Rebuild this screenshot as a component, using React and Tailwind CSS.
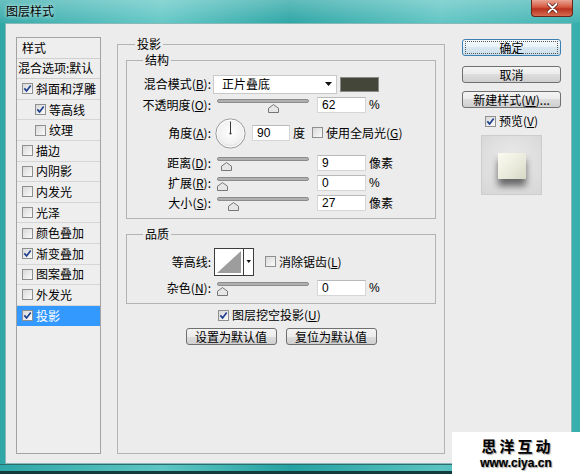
import React from 'react'

// 图层样式 dialog — 投影 page

const styles = [
  { name: '斜面和浮雕', on: true },
  { name: '等高线', on: true, sub: true },
  { name: '纹理', on: false, sub: true },
  { name: '描边', on: false },
  { name: '内阴影', on: false },
  { name: '内发光', on: false },
  { name: '光泽', on: false },
  { name: '颜色叠加', on: false },
  { name: '渐变叠加', on: true },
  { name: '图案叠加', on: false },
  { name: '外发光', on: false },
  { name: '投影', on: true, active: true },
]

function Check({ on }) {
  return (
    <span className="inline-flex h-[11px] w-[11px] shrink-0 items-center justify-center border border-[#8e8f8f] bg-linear-to-br from-[#d9d9d9] to-[#fbfbfb]">
      {on && (
        <svg width="9" height="9" viewBox="0 0 9 9">
          <path d="M1.3 4.4 L3.6 6.9 L7.7 1.6" fill="none" stroke="#1f3f8f" strokeWidth="1.7" />
        </svg>
      )}
    </span>
  )
}

function Key({ text, k }) {
  return (
    <>
      {text}(<span className="underline">{k}</span>)
    </>
  )
}

function Slider({ at }) {
  return (
    <div className="relative h-[16px] w-[92px] shrink-0">
      <div className="mt-[4px] h-[4px] w-full rounded-full border border-[#8c8c8c] bg-[#b0b0b0]" />
      <svg className="absolute top-[5px]" style={{ left: at }} width="11" height="9" viewBox="0 0 11 9">
        <path d="M0.5 8.5 V4.2 L5.5 0.6 L10.5 4.2 V8.5 Z" fill="#e6e6e6" stroke="#767676" />
      </svg>
    </div>
  )
}

function Num({ v }) {
  return (
    <div className="flex h-[16px] w-[49px] shrink-0 items-center border border-[#d6d6d6] border-t-[#b9b9b9] bg-white pl-[4px] font-['Liberation_Sans',sans-serif] text-[12px]">
      {v}
    </div>
  )
}

function Label({ children }) {
  return <div className="w-[84px] shrink-0 text-right">{children}</div>
}

function Btn({ children, def, className = '' }) {
  return (
    <button
      className={`flex h-[17px] items-center justify-center rounded-[3px] border text-[12px] leading-none ${
        def
          ? 'border-[#3c7fb1] bg-[linear-gradient(#f4f9fc,#e9f3f8_50%,#d9e8f1_50%,#cddfea)]'
          : 'border-[#707070] bg-[linear-gradient(#f4f4f4,#ebebeb_50%,#dddddd_50%,#cfcfcf)]'
      } ${className}`}
    >
      {children}
    </button>
  )
}

function Dial() {
  return (
    <svg width="31" height="31" viewBox="0 0 31 31" className="shrink-0">
      <defs>
        <radialGradient id="dg" cx="50%" cy="45%" r="55%">
          <stop offset="0%" stopColor="#ffffff" />
          <stop offset="75%" stopColor="#f1f1f1" />
          <stop offset="100%" stopColor="#d2d2d2" />
        </radialGradient>
      </defs>
      <circle cx="15.5" cy="15.5" r="14.6" fill="url(#dg)" stroke="#9c9c9c" />
      <circle cx="15.5" cy="15.5" r="13.4" fill="none" stroke="#ffffff" />
      <line x1="15.5" y1="15.5" x2="15.5" y2="3.5" stroke="#3a3a3a" strokeWidth="1" />
      <circle cx="15.5" cy="15.5" r="1.1" fill="#3a3a3a" />
    </svg>
  )
}

function Contour() {
  return (
    <svg width="40" height="28" viewBox="0 0 40 28" className="shrink-0">
      <rect x="0.5" y="0.5" width="39" height="27" fill="#ffffff" stroke="#3c3c3c" />
      <polygon points="3,25 27,3 27,25" fill="#9d9d9d" />
      <line x1="29.5" y1="0.5" x2="29.5" y2="27.5" stroke="#3c3c3c" />
      <polygon points="32.5,12 37,12 34.75,15" fill="#111" />
    </svg>
  )
}

export default function App() {
  return (
    <div className="relative flex h-[474px] w-[580px] flex-col overflow-hidden bg-[linear-gradient(90deg,#2ea7a6,#5ec6c4_28%,#24a2a1_50%,#5ac3c1_76%,#37afad)] font-['Noto_Sans_CJK_SC','Liberation_Sans',sans-serif] text-[12px] leading-none text-black">
      {/* title bar */}
      <div className="flex h-[23px] shrink-0 items-start justify-between bg-[linear-gradient(rgba(255,255,255,0.28),rgba(255,255,255,0.05))]">
        <span className="mt-[5px] pl-[6px] text-[12px] [text-shadow:0_0_4px_#ffffff]">图层样式</span>
        <div className="mr-[7px] flex h-[17px] w-[42px] items-center justify-center rounded-b-[4px] border border-t-0 border-[#6a2418] bg-[linear-gradient(#eba594,#d4573f_45%,#b9311d_55%,#d56c50)]">
          <svg width="11" height="10" viewBox="0 0 11 10">
            <path d="M1.5 1 L9.5 9 M9.5 1 L1.5 9" stroke="#4a150d" strokeWidth="3.4" strokeLinecap="round" />
            <path d="M1.5 1 L9.5 9 M9.5 1 L1.5 9" stroke="#ffffff" strokeWidth="2" strokeLinecap="round" />
          </svg>
        </div>
      </div>

      {/* client area */}
      <div className="ml-[5px] flex h-[441px] w-[567px] shrink-0 gap-0 border border-[#86b9b8] bg-[#ececec] px-[10px] pt-[12px]">
        {/* left style list */}
        <div className="mt-[1px] h-[417px] w-[85px] shrink-0 overflow-hidden border border-[#a3a3a3] bg-[#eeeeee]">
          <div className="flex h-[20.6px] items-center border-b border-[#cfcfcf] pl-[5px]">样式</div>
          <div className="flex h-[20.6px] items-center overflow-hidden whitespace-nowrap border-b border-[#cfcfcf] pl-[1px]">混合选项:默认</div>
          {styles.map((s) => (
            <div
              key={s.name}
              className={`flex h-[20.6px] items-center gap-[3px] border-b ${
                s.active ? 'border-[#3399ff] bg-[#3399ff] text-white' : 'border-[#d6d6d6]'
              } ${s.sub ? 'pl-[18px]' : 'pl-[5px]'}`}
            >
              <Check on={s.on} />
              <span>{s.name}</span>
            </div>
          ))}
        </div>

        {/* middle: 投影 */}
        <fieldset className="ml-[16px] h-[418px] w-[328px] shrink-0 border border-[#b3b3b3]">
          <legend className="ml-[17px] px-[2px] leading-[16px]">投影</legend>
          <div className="px-[8px]">
            <fieldset className="border border-[#b3b3b3] pb-[7px]">
              <legend className="ml-[16px] px-[2px] leading-[16px]">结构</legend>

              <div className="mt-[6px] flex h-[20px] items-center">
                <Label><Key text="混合模式" k="B" />:</Label>
                <div className="ml-[2px] flex h-[19px] w-[124px] items-center justify-between border border-[#c9c9c9] bg-white pl-[8px] pr-[4px]">
                  <span>正片叠底</span>
                  <svg width="7" height="4" viewBox="0 0 7 4">
                    <polygon points="0,0 7,0 3.5,4" fill="#111" />
                  </svg>
                </div>
                <div className="ml-[3px] h-[15px] w-[39px] border border-[#8a8a8a] bg-[#45463a]" />
              </div>

              <div className="mt-[3px] flex h-[16px] items-center">
                <Label><Key text="不透明度" k="O" />:</Label>
                <div className="ml-[6px]"><Slider at={51} /></div>
                <div className="ml-[8px]"><Num v="62" /></div>
                <span className="ml-[3px] font-['Liberation_Sans',sans-serif]">%</span>
              </div>

              <div className="mt-[4px] flex h-[32px] items-center">
                <Label><Key text="角度" k="A" />:</Label>
                <div className="ml-[4px]"><Dial /></div>
                <div className="ml-[6px] flex h-[16px] w-[38px] items-center border border-[#d6d6d6] border-t-[#b9b9b9] bg-white pl-[4px] font-['Liberation_Sans',sans-serif]">90</div>
                <span className="ml-[3px]">度</span>
                <span className="ml-[7px]"><Check on={false} /></span>
                <span className="ml-[3px]"><Key text="使用全局光" k="G" /></span>
              </div>

              <div className="mt-[6px] flex h-[16px] items-center">
                <Label><Key text="距离" k="D" />:</Label>
                <div className="ml-[6px]"><Slider at={4} /></div>
                <div className="ml-[8px]"><Num v="9" /></div>
                <span className="ml-[3px]">像素</span>
              </div>

              <div className="mt-[4px] flex h-[16px] items-center">
                <Label><Key text="扩展" k="R" />:</Label>
                <div className="ml-[6px]"><Slider at={0} /></div>
                <div className="ml-[8px]"><Num v="0" /></div>
                <span className="ml-[3px] font-['Liberation_Sans',sans-serif]">%</span>
              </div>

              <div className="mt-[4px] flex h-[16px] items-center">
                <Label><Key text="大小" k="S" />:</Label>
                <div className="ml-[6px]"><Slider at={11} /></div>
                <div className="ml-[8px]"><Num v="27" /></div>
                <span className="ml-[3px]">像素</span>
              </div>
            </fieldset>

            <fieldset className="mt-[7px] border border-[#b3b3b3] pb-[7px]">
              <legend className="ml-[16px] px-[2px] leading-[16px]">品质</legend>
              <div className="mt-[6px] flex h-[27px] items-center">
                <Label>等高线:</Label>
                <div className="ml-[3px]"><Contour /></div>
                <span className="ml-[11px]"><Check on={false} /></span>
                <span className="ml-[3px]"><Key text="消除锯齿" k="L" /></span>
              </div>
              <div className="mt-[5px] flex h-[16px] items-center">
                <Label><Key text="杂色" k="N" />:</Label>
                <div className="ml-[6px]"><Slider at={0} /></div>
                <div className="ml-[8px]"><Num v="0" /></div>
                <span className="ml-[3px] font-['Liberation_Sans',sans-serif]">%</span>
              </div>
            </fieldset>

            <div className="mt-[4px] flex h-[14px] items-center gap-[3px] pl-[92px]">
              <Check on />
              <span><Key text="图层挖空投影" k="U" /></span>
            </div>
            <div className="mt-[6px] flex justify-center gap-[9px]">
              <Btn className="w-[91px]">设置为默认值</Btn>
              <Btn className="w-[91px]">复位为默认值</Btn>
            </div>
          </div>
        </fieldset>

        {/* right buttons */}
        <div className="ml-[17px] mt-[3px] flex w-[99px] shrink-0 flex-col items-center">
          <Btn def className="w-[99px]">
            <span className="flex h-[13px] w-[93px] items-center justify-center border border-dotted border-[#555]">确定</span>
          </Btn>
          <Btn className="mt-[10px] w-[99px]">取消</Btn>
          <Btn className="mt-[8px] w-[99px]">
            新建样式(<span className="underline">W</span>)...
          </Btn>
          <div className="mt-[6px] flex h-[14px] items-center gap-[3px]">
            <Check on />
            <span><Key text="预览" k="V" /></span>
          </div>
          <div className="mt-[7px] flex h-[60px] w-[61px] justify-center border border-[#cdcdcd] bg-[radial-gradient(circle_at_50%_45%,#ececec,#d6d6d6)] pt-[17px]">
            <div className="h-[26px] w-[28px] bg-[linear-gradient(135deg,#fbfbf1,#e9e9da_60%,#d7d7c6)] shadow-[0_7px_7px_rgba(0,0,0,0.55)]" />
          </div>
        </div>
      </div>

      {/* bottom frame */}
      <div className="h-[10px] shrink-0 border-t border-[#2b6e6d] border-b-[3px] border-b-[#123a3a]" />

      {/* watermark */}
      <div className="absolute bottom-0 right-0 flex h-[42px] w-[128px] flex-col items-center bg-white pt-[6px]">
        <span className="h-[16px] pl-[3px] text-[15px] font-bold leading-[16px] tracking-[3px] [text-shadow:1px_1px_1px_#9a9a9a]">思洋互动</span>
        <span className="mt-[3px] h-[12px] font-['Liberation_Sans',sans-serif] text-[12px] font-bold leading-[12px] [text-shadow:0_0_1px_#888,1px_1px_1px_#aaa]">www.ciya.cn</span>
      </div>
    </div>
  )
}
